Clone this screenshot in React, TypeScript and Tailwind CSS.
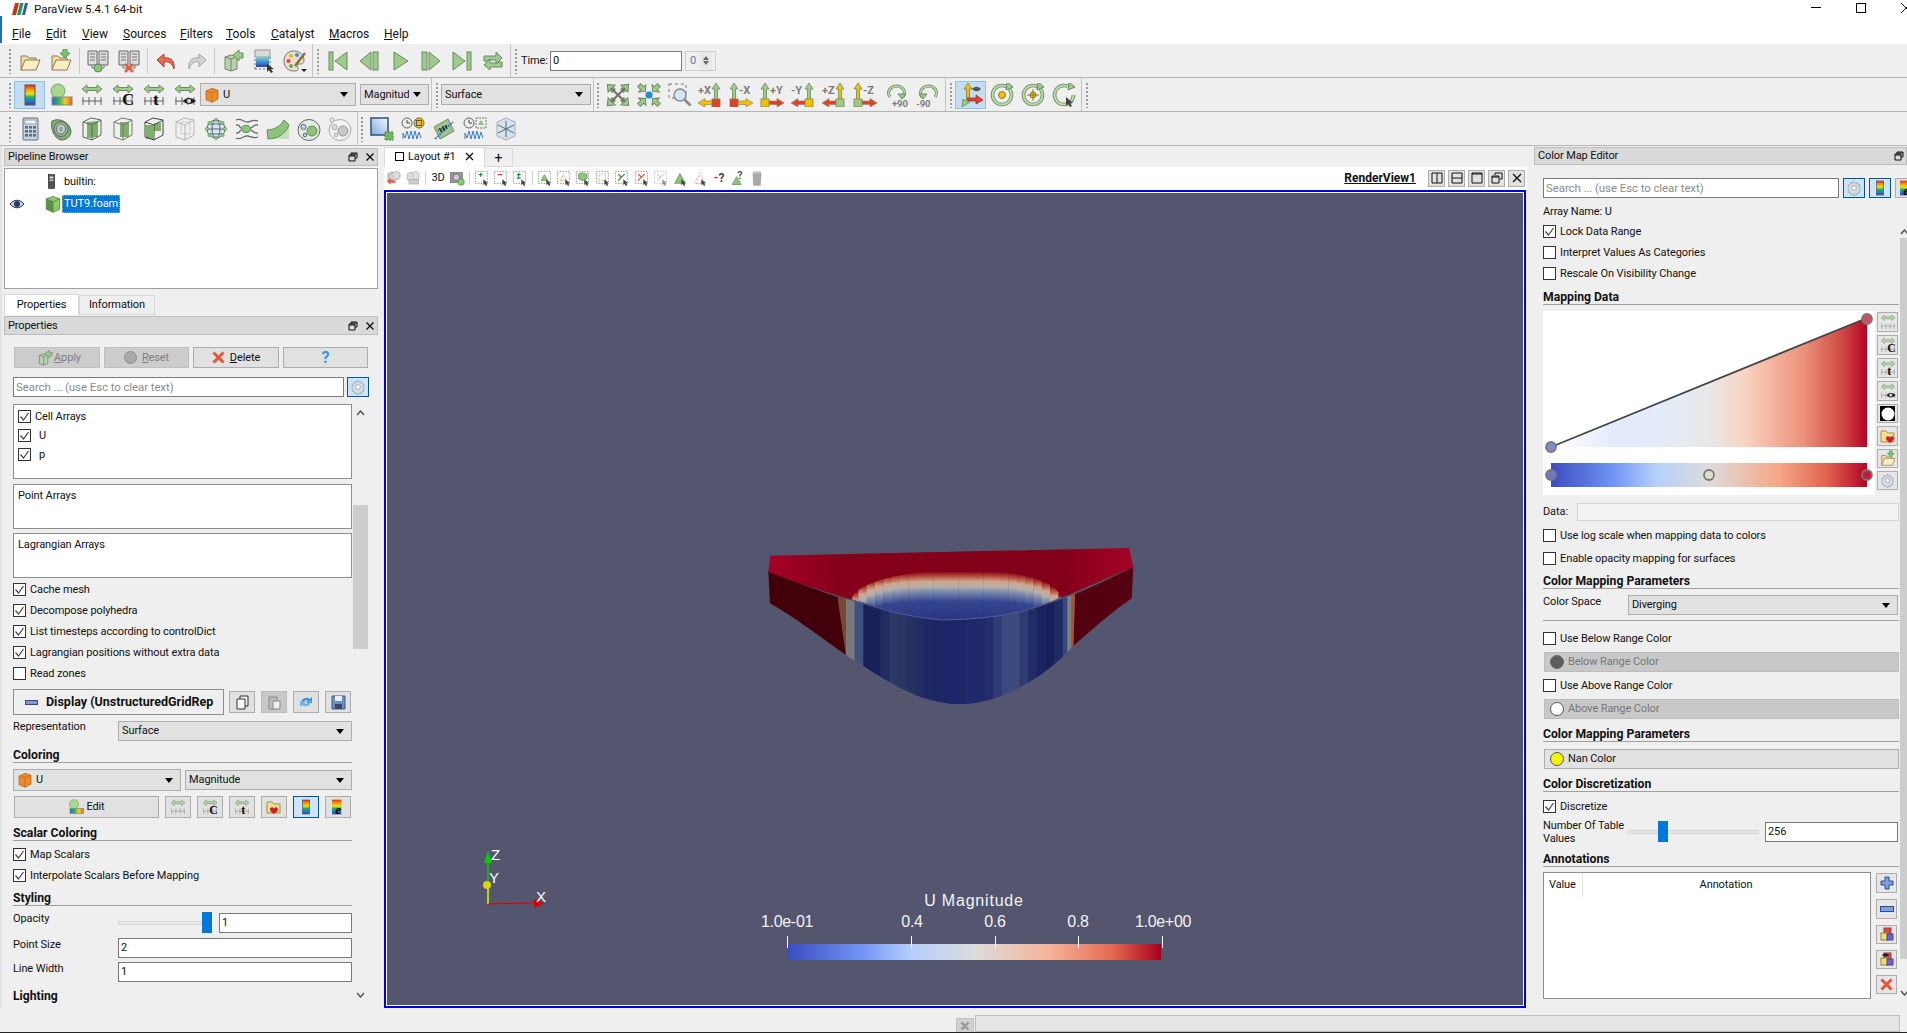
import type { ReactNode } from "react";

const FILL = "#9ccb8c";
const LINE = "#6d8a60";

const Ico = ({ children, s = 24 }: { children: ReactNode; s?: number }) => (
  <svg width={s} height={s} viewBox="0 0 24 24" className="block shrink-0">
    {children}
  </svg>
);

const FolderShape = () => (
  <>
    <path d="M3 21V7h6l2 2h7v3" fill="#f3dca0" stroke="#8a7a50" />
    <path d="M3 21l4-10h15l-4 10z" fill="#fbeec5" stroke="#8a7a50" />
  </>
);
const OpenFile = () => <Ico><FolderShape /></Ico>;
const LoadState = () => (
  <Ico>
    <FolderShape />
    <path d="M14 0h4v4h3l-5 5-5-5h3z" fill="#76c46e" stroke="#5a9a55" />
  </Ico>
);
const Servers = () => (
  <>
    <path d="M2 2h9v14H2zM13 2h9v14h-9z" fill="#dcdcdc" stroke="#666" />
    <path d="M4 5h5M4 8h5M4 11h5M15 5h5M15 8h5M15 11h5" stroke="#777" />
    <path d="M6 16v3h12v-3" fill="none" stroke="#777" />
  </>
);
const Connect = () => (
  <Ico>
    <Servers />
    <circle cx="12" cy="19" r="4" fill="#8cc47a" stroke="#5f8a55" />
  </Ico>
);
const Disconnect = () => (
  <Ico>
    <Servers />
    <path d="M8 15l8 8M16 15l-8 8" stroke="#e0604a" strokeWidth="2.6" />
  </Ico>
);
const Undo = () => (
  <Ico>
    <path d="M20 20c1-8-3-12-10-11V5L3 11l7 7v-5c5-1 8 1 10 7z" fill="#ea6a50" stroke="#a8402e" />
  </Ico>
);
const Redo = () => (
  <Ico>
    <path d="M4 20c-1-8 3-12 10-11V5l7 6-7 7v-5c-5-1-8 1-10 7z" fill="#d4d4d4" stroke="#a2a2a2" />
  </Ico>
);
const AutoApply = () => (
  <Ico>
    <path d="M4 8l6-2 6 2v12l-6 2-6-2z" fill="#b9cfae" stroke="#6d8a60" />
    <path d="M4 8l6 2 6-2M10 10v12" fill="none" stroke="#6d8a60" />
    <path d="M12 6l6-5v3h4v5h-4v3z" fill={FILL} stroke={LINE} />
  </Ico>
);
const PickColor = () => (
  <Ico>
    <rect x="3" y="1" width="15" height="7" fill="#d9d9d9" stroke="#999" />
    <rect x="4" y="8" width="13" height="10" fill="url(#blues)" />
    <path d="M3 20V8M18 8v12M3 20h15" stroke="#666" strokeDasharray="2 2" fill="none" />
    <path d="M15 15v8l2-2 2 3 2-1-2-3h3z" fill="#333" />
  </Ico>
);
const Palette = () => (
  <Ico>
    <path d="M11 2c6 0 10 4 10 9 0 4-3 4-5 4-2 0-2 2-1 4 1 2-1 3-4 3-6 0-10-4-10-10S5 2 11 2z" fill="#eadfca" stroke="#777" />
    <circle cx="8" cy="7" r="2" fill="#e6b62e" />
    <circle cx="14" cy="6" r="2" fill="#3d8fd6" />
    <circle cx="5.5" cy="12" r="2" fill="#d9483b" />
    <circle cx="8" cy="17" r="2" fill="#5fae56" />
    <path d="M12 17L22 4" stroke="#8a6d3b" strokeWidth="2.4" />
    <path d="M18 20h6l-3 3z" fill="#222" />
  </Ico>
);

const VFirst = () => (
  <Ico><rect x="3" y="3" width="4" height="18" fill={FILL} stroke={LINE} /><path d="M21 3v18L9 12z" fill={FILL} stroke={LINE} /></Ico>
);
const VPrev = () => (
  <Ico><path d="M14 3v18L3 12z" fill={FILL} stroke={LINE} /><rect x="16" y="3" width="5" height="18" fill={FILL} stroke={LINE} /></Ico>
);
const VPlay = () => (
  <Ico><path d="M6 3v18l14-9z" fill={FILL} stroke={LINE} /></Ico>
);
const VNext = () => (
  <Ico><rect x="3" y="3" width="5" height="18" fill={FILL} stroke={LINE} /><path d="M10 3v18l11-9z" fill={FILL} stroke={LINE} /></Ico>
);
const VLast = () => (
  <Ico><path d="M3 3v18l12-9z" fill={FILL} stroke={LINE} /><rect x="17" y="3" width="4" height="18" fill={FILL} stroke={LINE} /></Ico>
);
const VLoop = () => (
  <Ico>
    <path d="M3 12V7h12V3l6 6-6 6v-4H7v1z" fill={FILL} stroke={LINE} />
    <path d="M21 13v5H9v3l-6-5 6-6v4h8v-1z" fill={FILL} stroke={LINE} />
  </Ico>
);

const Rainbow = () => (
  <Ico>
    <rect x="7" y="2" width="10" height="20" fill="url(#rainbow)" stroke="#555" />
  </Ico>
);
const ColorEdit = ({ s = 24 }: { s?: number }) => (
  <Ico s={s}>
    <circle cx="9" cy="8" r="7" fill="#a8d88e" stroke="#7aa56d" />
    <rect x="3" y="14" width="20" height="8" fill="url(#rainbowH)" stroke="#888" />
  </Ico>
);
const RulerArrow = ({ pale }: { pale?: boolean }) => (
  <>
    <path d="M2 6l5-4v2.5h10V2l5 4-5 4V7.5H7V10z" fill={FILL} stroke={LINE} opacity={pale ? 0.7 : 1} />
    <path d="M2 18h20M3 14v8M9 14v8M15 14v8M21 14v8" stroke={pale ? "#999" : "#666"} fill="none" />
  </>
);
const Rescale = ({ pale }: { pale?: boolean }) => <Ico><RulerArrow pale={pale} /></Ico>;
const RescaleText = ({ t, pale }: { t: string; pale?: boolean }) => (
  <Ico>
    <RulerArrow pale={pale} />
    <text x="11" y="22" fontFamily="Liberation Serif, serif" fontWeight="bold" fontSize="17" fill="#111">{t}</text>
  </Ico>
);
const RescaleEye = ({ pale }: { pale?: boolean }) => (
  <Ico>
    <RulerArrow pale={pale} />
    <path d="M10 18c3-4 9-4 13 0-4 4-10 4-13 0z" fill="#222" />
    <circle cx="16" cy="18" r="2" fill="#ddd" />
  </Ico>
);

const Arrows4 = ({ inward }: { inward?: boolean }) => (
  <Ico>
    {[45, 135, 225, 315].map((a) => (
      <path
        key={a}
        transform={`rotate(${a} 12 12)`}
        d={inward ? "M12 7l-5-4.5h3V-2h4v4.5h3z" : "M12 -3l5 6h-3v3h-4V3H7z"}
        fill={FILL}
        stroke={LINE}
      />
    ))}
    {inward ? <circle cx="12" cy="12" r="3.6" fill="#1e8bd2" /> : <path d="M5 5l14 14M19 5L5 19" stroke="#6b7263" strokeWidth="2" />}
  </Ico>
);
const ZoomBox = () => (
  <Ico>
    <path d="M1 1h17v14H1z" fill="none" stroke="#777" strokeDasharray="3 3" />
    <circle cx="12" cy="12" r="6" fill="#cfe6f7" stroke="#888" strokeWidth="1.4" />
    <path d="M16.5 16.5l6 6" stroke="#888" strokeWidth="2.6" />
  </Ico>
);
const AxisIcon = ({ label, box, up, arm, right }: { label: string; box: string; up: string; arm: string; right?: boolean }) => {
  const bx = right ? 2 : 15;
  return (
    <svg width={27} height={24} viewBox="0 0 27 24" className="block shrink-0">
      <path transform={`translate(${bx} 0)`} d="M4 0l4 6H5.5v11h-3V6H0z" fill={up} stroke="#6d8a60" strokeWidth=".8" />
      {right ? (
        <path d="M10 18h8v-2.5l7 4.5-7 4v-2.500h-8z" fill={arm} stroke="#886" strokeWidth=".7" />
      ) : (
        <path d="M16 18H8v-2.500L1 20l7 4v-2.500h8z" fill={arm} stroke="#886" strokeWidth=".7" />
      )}
      <rect x={bx} y="16" width="8" height="8" fill={box} stroke="#887a50" strokeWidth=".8" />
      <text x={right ? 11 : 1} y="11" fontFamily="Roboto, sans-serif" fontWeight="bold" fontSize="11" fill="#7d7d7d">{label}</text>
    </svg>
  );
};
const Ring = ({ children, open }: { children?: ReactNode; open?: boolean }) => (
  <Ico>
    <circle cx="12" cy="12" r="9.500" fill="none" stroke={LINE} strokeWidth="3.600" strokeDasharray={open ? "48 12" : undefined} />
    <circle cx="12" cy="12" r="9.500" fill="none" stroke="#b7dca9" strokeWidth="2" strokeDasharray={open ? "48 12" : undefined} />
    <path d="M17 -1l6 5-7 3z" fill={FILL} stroke={LINE} />
    {children}
  </Ico>
);
const Rot = ({ label, flip }: { label: string; flip?: boolean }) => (
  <Ico>
    <g transform={flip ? "translate(24 0) scale(-1 1)" : undefined}>
      <path d="M16 14a8 7 0 1 0-13 0" transform="translate(2 0)" fill="none" stroke={LINE} strokeWidth="3" />
      <path d="M16 14a8 7 0 1 0-13 0" transform="translate(2 0)" fill="none" stroke="#b7dca9" strokeWidth="1.500" />
      <path d="M13 11h8l-4 5z" fill={FILL} stroke={LINE} />
    </g>
    <text x={flip ? 0 : 7} y="23.500" fontFamily="Roboto, sans-serif" fontWeight="bold" fontSize="9.500" fill="#7d7d7d">{label}</text>
  </Ico>
);
const OrientAxes = () => (
  <Ico>
    <path d="M9 0l4 6h-2.500v10h-3V6H5z" fill="#f6c000" stroke="#8a7a30" strokeWidth=".8" />
    <path d="M8 15h9v-3l7 5-7 4v-3H9z" fill="#e2402e" stroke="#933" strokeWidth=".8" />
    <path d="M8 15v4h3l-8 5 1-8 2 2 2-3z" fill={FILL} stroke={LINE} strokeWidth=".8" />
    <path d="M13 6c3-3 6-3 9 0-3 3-6 3-9 0z" fill="#555" />
  </Ico>
);

const Calc = () => (
  <Ico>
    <rect x="5" y="1" width="15" height="22" rx="1" fill="#c9d4dc" stroke="#5e7080" />
    <rect x="7" y="3" width="11" height="4" fill="#f1f4f6" stroke="#7a8a98" strokeWidth=".7" />
    {[9, 13, 17].map((y) => [7, 11, 15].map((x) => <rect key={`${x}-${y}`} x={x} y={y} width="3" height="2.600" fill="#5e7080" />))}
  </Ico>
);
const Contour = () => (
  <Ico>
    <path d="M3 4c8-4 18 2 19 10 0 6-5 9-10 9C6 22 1 12 3 4z" fill="#7fae6b" stroke="#55704b" />
    <ellipse cx="12" cy="12" rx="7" ry="7.500" fill="#9fb1a3" stroke="#4f6f64" />
    <ellipse cx="12" cy="12" rx="4.500" ry="5" fill="#c5cdc9" stroke="#5d7a70" />
    <ellipse cx="12" cy="12" rx="2" ry="2.500" fill="#8fa199" />
  </Ico>
);
const Cube = ({ stroke = "#555", children }: { stroke?: string; children?: ReactNode }) => (
  <Ico>
    {children}
    <path d="M3 5l8-4 10 2v15l-9 5-9-3z" fill="none" stroke={stroke} />
    <path d="M3 5l9 3 9-5M12 8v15" fill="none" stroke={stroke} />
  </Ico>
);
const Glyph = () => (
  <Ico>
    <circle cx="12" cy="12" r="9" fill="#d6e4ee" stroke="#567" />
    <ellipse cx="12" cy="12" rx="4" ry="9" fill="none" stroke="#567" />
    <path d="M3 12h18M5 7h14M5 17h14" stroke="#567" fill="none" />
    {[[12, 3], [12, 21], [3, 12], [21, 12], [5.500, 6], [18.500, 6], [5.500, 18], [18.500, 18]].map(([x, y]) => (
      <circle key={`${x}-${y}`} cx={x} cy={y} r="1.800" fill="#8cc47a" stroke="#5f8a55" strokeWidth=".5" />
    ))}
  </Ico>
);
const Stream = () => (
  <Ico>
    <path d="M1 3c5-3 8 3 12 2s6-3 10-1M1 21c5 3 8-3 12-2s6 3 10 1M1 8c4-1 3 2 5 3M23 8c-4-1-5 2-7 3M1 16c4 1 3-2 5-3M23 16c-4 1-5-2-7-3" fill="none" stroke="#666" strokeWidth="1.300" />
    <ellipse cx="11" cy="12" rx="4.500" ry="3.500" fill="#8cc47a" stroke="#5f8a55" />
  </Ico>
);
const Warp = () => (
  <Ico>
    <path d="M1 13C8 13 15 9 18 3l5 4v15H1z" fill="#c5dfba" />
    <path d="M1 13C8 13 15 9 18 3l5 5C20 16 12 22 2 22z" fill="#8cc47a" stroke="#6d8a60" />
  </Ico>
);
const Group = ({ pale }: { pale?: boolean }) => (
  <Ico>
    <ellipse cx="12" cy="13" rx="11" ry="10.500" fill={pale ? "#f2f2f2" : "#e4ebe2"} stroke={pale ? "#aaa" : "#666"} />
    <circle cx="15" cy="14" r="5" fill={pale ? "#c6c6c6" : "#8cc47a"} stroke={pale ? "#999" : "#5f8a55"} />
    <circle cx="6.500" cy="10" r="2.600" fill={pale ? "#ddd" : "#c6d3e0"} stroke={pale ? "#aaa" : "#567"} />
    <circle cx="8" cy="18" r="1.800" fill={pale ? "#ddd" : "#c6d3e0"} stroke={pale ? "#aaa" : "#567"} />
    {pale && <circle cx="4" cy="3" r="2" fill="#eee" stroke="#aaa" />}
  </Ico>
);
const NewBox = () => (
  <Ico>
    <rect x="1" y="1" width="17" height="17" fill="url(#blueSq)" stroke="#3a5a7a" strokeWidth="1.600" />
    <rect x="15" y="15" width="8" height="8" fill="#72b85e" stroke="#4f8a42" strokeDasharray="2 1" />
  </Ico>
);
const Wave = () => (
  <path d="M2 22V16l2 5 2-7 2 8 2-8 2 8 2-8 2 8 2-7 2 6" fill="none" stroke="#3a7fc4" strokeWidth="1" />
);
const PlotOver = () => (
  <Ico>
    <circle cx="6" cy="6" r="5" fill="#eee" stroke="#666" />
    <path d="M6 3v3h3" fill="none" stroke="#444" />
    <circle cx="18" cy="6" r="5" fill="#f6c000" stroke="#666" />
    <rect x="15.500" y="3.500" width="5" height="5" fill="none" stroke="#555" />
    <Wave />
  </Ico>
);
const PlotTime = () => (
  <Ico>
    <path d="M2 10L16 2l6 12-14 8z" fill="#9fc48f" stroke="#6d8a60" />
    <path d="M3 22L21 5" stroke="#2f74c0" strokeWidth="1.800" strokeDasharray="2 1" />
    <path d="M6 14l2-3 1 4 2-6 1 5 2-6 1 4" fill="none" stroke="#234" />
  </Ico>
);
const PlotSel = () => (
  <Ico>
    <circle cx="6" cy="6" r="5" fill="#eee" stroke="#666" />
    <path d="M6 3v3h3" fill="none" stroke="#444" />
    <rect x="13" y="1" width="10" height="10" fill="none" stroke="#777" strokeDasharray="2 1" />
    <path d="M18 3l3 5h-6z" fill="#8cc47a" />
    <Wave />
  </Ico>
);
const CubeAxes = () => (
  <Ico>
    <path d="M3 5l9-4 9 4v14l-9 4-9-4z" fill="#d5e1ec" stroke="#9eb0c0" />
    <path d="M12 4v16M4 16l16-8M4 8l16 8" stroke="#5a6b78" />
  </Ico>
);

const Dotted = ({ children, s = 16 }: { children?: ReactNode; s?: number }) => (
  <Ico s={s}>
    <path d="M2 2h18v18H2z" fill="none" stroke="#555" strokeDasharray="2 2" />
    {children}
    <path d="M14 14v9l2-2 2 3 2-1-2-3h3z" fill="#444" />
  </Ico>
);
const Pointer = () => <path d="M14 14v9l2-2 2 3 2-1-2-3h3z" fill="#444" />;

const ViewIcons = {
  swap: (
    <Ico s={16}><path d="M3 6l6-3 7 3v8l-7 3-6-3z" fill="#ccc" stroke="#888" /><path d="M10 4l7-2 4 3v7l-6 3" fill="#ddd" stroke="#999" /><path d="M15 20c-1-4-4-6-8-5v-3l-6 5 6 5v-3c3 0 6 0 8 1z" fill="#e0604a" /></Ico>
  ),
  swapGray: (
    <Ico s={16}><path d="M3 6l6-3 7 3v8l-7 3-6-3z" fill="#ddd" stroke="#aaa" /><path d="M10 4l7-2 4 3v7l-6 3z" fill="#e3e3e3" stroke="#aaa" /><rect x="6" y="14" width="14" height="7" fill="#ccc" stroke="#aaa" /></Ico>
  ),
  cam: (
    <Ico s={16}><rect x="2" y="4" width="18" height="15" fill="#999" stroke="#666" /><circle cx="11" cy="11" r="5" fill="#ccc" stroke="#555" /><circle cx="18" cy="18" r="5" fill="#8cc47a" stroke="#5f8a55" /></Ico>
  ),
};

const Tb = ({ children, sel }: { children?: ReactNode; sel?: boolean }) => (
  <div className={`w-[31px] h-[28px] flex items-center justify-center shrink-0 border ${sel ? "bg-[#c4ddf2] border-[#8cc2ee]" : "border-transparent"}`}>
    {children}
  </div>
);
const Sep = ({ w = 6 }: { w?: number }) => (
  <div className="flex justify-center shrink-0 h-[26px]" style={{ width: w }}>
    <div className="w-px h-full bg-[#cdcdcd]" />
  </div>
);
const EndCap = ({ w = 9 }: { w?: number }) => (
  <div className="flex h-full shrink-0 items-center">
    <div className="w-px h-full bg-[#c4c4c4] ml-[2px]" />
    <div className="flex justify-center" style={{ width: w }}>
      <div className="w-[2px] h-[26px] bg-[radial-gradient(circle,#9a9a9a_35%,transparent_40%)] bg-[length:2px_4px]" />
    </div>
  </div>
);
const TbRow = ({ children }: { children: ReactNode }) => (
  <div className="h-[34px] flex items-center border-b border-[#b4b4b4] pl-[6px] overflow-hidden">
    <div className="w-[8px] flex justify-center shrink-0">
      <div className="w-[2px] h-[26px] bg-[radial-gradient(circle,#9a9a9a_35%,transparent_40%)] bg-[length:2px_4px]" />
    </div>
    {children}
  </div>
);
const Combo = ({ children, className = "" }: { children: ReactNode; className?: string }) => (
  <div className={`flex items-center justify-between bg-[#e1e1e1] border border-[#adadad] pl-[3px] pr-[7px] shrink-0 overflow-hidden ${className}`}>
    <div className="flex items-center gap-[3px] overflow-hidden whitespace-nowrap">{children}</div>
    <div className="w-0 h-0 border-x-[4.500px] border-x-transparent border-t-[5px] border-t-black shrink-0 ml-[2px]" />
  </div>
);
const OrangeCube = ({ s = 16 }: { s?: number }) => (
  <Ico s={s}>
    <path d="M12 2l9 3v13l-9 5-9-4V6z" fill="#ef8a2a" stroke="#a55c12" />
    <path d="M3 6l9 3 9-4M12 9v14" fill="none" stroke="#b96a1a" />
  </Ico>
);

const Box = ({ checked = true }: { checked?: boolean }) => (
  <div className="w-[13px] h-[13px] border border-[#333] bg-white shrink-0 flex items-center justify-center">
    {checked && (
      <svg width={11} height={11} viewBox="0 0 11 11"><path d="M1.500 5.500L4.500 9l5-7" fill="none" stroke="#444" strokeWidth="1.200" /></svg>
    )}
  </div>
);
const Check = ({ label, checked = true }: { label: string; checked?: boolean }) => (
  <div className="h-[21px] flex items-center gap-[4px] whitespace-nowrap">
    <Box checked={checked} />
    <span>{label}</span>
  </div>
);
const Section = ({ title, className = "" }: { title: string; className?: string }) => (
  <div className={`h-[15px] font-bold text-[12.200px] tracking-normal leading-[14px] border-b border-[#a0a0a0] whitespace-nowrap ${className}`}>{title}</div>
);
const Field = ({ value, className = "" }: { value: string; className?: string }) => (
  <div className={`bg-white border border-[#7a7a7a] h-[20px] flex items-center pl-[2px] ${className}`}>{value}</div>
);
const SmBtn = ({ children, sel }: { children?: ReactNode; sel?: boolean }) => (
  <div className={`w-[26px] h-[22px] flex items-center justify-center shrink-0 border ${sel ? "bg-[#cce4f7] border-[#005499]" : "bg-[#e1e1e1] border-[#adadad]"}`}>
    {children}
  </div>
);
const PanelHead = ({ title, close, tall }: { title: string; close?: boolean; tall?: boolean }) => (
  <div className={`${tall ? "h-[19px]" : "h-[18px]"} flex items-center justify-between bg-[#d9d9d9] border border-[#bdbdbd] pl-[3px] pr-[2px]`}>
    <span>{title}</span>
    <div className="flex items-center gap-[7px]">
      <DockIcon />
      {close && <CloseX />}
    </div>
  </div>
);
const DockIcon = () => (
  <svg width={10} height={10} viewBox="0 0 10 10" className="block">
    <path d="M3 3V1h6v5H7M1 3h6v6H1zM1 4h6M3 2h6" fill="none" stroke="#111" />
  </svg>
);
const CloseX = () => (
  <svg width={10} height={10} viewBox="0 0 10 10" className="block">
    <path d="M1.500 1.500l7 7M8.500 1.500l-7 7" stroke="#111" strokeWidth="1.400" />
  </svg>
);
const Gear = ({ s = 16 }: { s?: number }) => (
  <Ico s={s}>
    <path d="M12 2l2 3 3-1 1 3 3 1-1 3 2 2-2 2 1 3-3 1-1 3-3-1-2 3-2-3-3 1-1-3-3-1 1-3-2-2 2-2-1-3 3-1 1-3 3 1z" fill="#d5dbe0" stroke="#8a97a3" />
    <circle cx="12" cy="12" r="3.500" fill="#f4f6f8" stroke="#8a97a3" />
  </Ico>
);
const GearBtn = ({ children }: { children: ReactNode }) => (
  <div className="w-[22px] h-[20px] bg-[#cce4f7] border border-[#005499] flex items-center justify-center shrink-0">{children}</div>
);
const Search = ({ className = "" }: { className?: string }) => (
  <div className={`h-[20px] bg-white border border-[#7a7a7a] flex items-center pl-[2px] text-[11.500px] text-[#8b8b8b] whitespace-nowrap shrink-0 ${className}`}>
    Search ... (use Esc to clear text)
  </div>
);
const Disabled = ({ children, className = "" }: { children: ReactNode; className?: string }) => (
  <div className={`h-[20px] bg-[#c8c8c8] border border-[#bdbdbd] flex items-center pl-[5px] gap-[4px] text-[#777] ${className}`}>{children}</div>
);
const Swatch = ({ className }: { className: string }) => <div className={`w-[14px] h-[14px] rounded-full border border-[#555] ${className}`} />;
const Slider = ({ w, at }: { w: number; at: number }) => (
  <div className="relative h-[21px] flex items-center" style={{ width: w }}>
    <div className="w-full h-[4px] bg-[#e6e6e6] border border-[#d6d6d6]" />
    <div className="absolute top-0 w-[10px] h-[21px] bg-[#0078d7]" style={{ left: at }} />
  </div>
);
const SideBtn = ({ children, h = 20 }: { children?: ReactNode; h?: number }) => (
  <div className="w-[21px] bg-[#e6e6e6] border border-[#adadad] flex items-center justify-center shrink-0" style={{ height: h }}>
    {children}
  </div>
);
const Sm = ({ children }: { children: ReactNode }) => <div className="scale-[0.7] shrink-0">{children}</div>;

function TopToolbars() {
  return (
    <div>
      <TbRow>
        <Tb><OpenFile /></Tb><Tb><LoadState /></Tb>
        <Sep />
        <Tb><Connect /></Tb><Tb><Disconnect /></Tb>
        <Sep />
        <Tb><Undo /></Tb><Tb><Redo /></Tb>
        <Sep w={5} />
        <Tb><AutoApply /></Tb><Tb><PickColor /></Tb><Tb><Palette /></Tb>
        <EndCap w={9} />
        <Tb><VFirst /></Tb><Tb><VPrev /></Tb><Tb><VPlay /></Tb><Tb><VNext /></Tb><Tb><VLast /></Tb><Tb><VLoop /></Tb>
        <EndCap w={9} />
        <span className="ml-[1px] w-[29px] shrink-0">Time:</span>
        <div className="w-[132px] h-[20px] bg-white border border-[#7a7a7a] flex items-center pl-[2px] shrink-0">0</div>
        <div className="ml-[3px] w-[31px] h-[20px] border border-[#cfcfcf] flex items-center justify-between pl-[4px] pr-[3px] text-[#5f7fa8] shrink-0">
          <span>0</span>
          <div className="w-[12px] h-[18px] flex flex-col gap-[1px] justify-center items-center bg-[#e8e8e8]">
            <div className="w-0 h-0 border-x-[3px] border-x-transparent border-b-[4px] border-b-[#666]" />
            <div className="w-0 h-0 border-x-[3px] border-x-transparent border-t-[4px] border-t-[#666]" />
          </div>
        </div>
      </TbRow>
      <TbRow>
        <Tb sel><Rainbow /></Tb><Tb><ColorEdit /></Tb><Tb><Rescale /></Tb><Tb><RescaleText t="C" /></Tb><Tb><RescaleText t="t" /></Tb><Tb><RescaleEye /></Tb>
        <Combo className="w-[156px] h-[23px]"><OrangeCube /><span>U</span></Combo>
        <Combo className="ml-[4px] w-[69px] h-[21px]"><span className="w-[45px] overflow-hidden">Magnitude</span></Combo>
        <EndCap w={9} />
        <Combo className="w-[150px] h-[21px]"><span>Surface</span></Combo>
        <EndCap w={8} />
        <Tb><Arrows4 /></Tb><Tb><Arrows4 inward /></Tb><Tb><ZoomBox /></Tb>
        <Tb><AxisIcon label="+X" box="#e2402e" up={FILL} arm="#f6c000" /></Tb>
        <Tb><AxisIcon label="-X" box="#e2402e" up={FILL} arm="#f6c000" right /></Tb>
        <Tb><AxisIcon label="+Y" box="#f6c000" up={FILL} arm="#e2402e" right /></Tb>
        <Tb><AxisIcon label="-Y" box="#f6c000" up={FILL} arm="#e2402e" /></Tb>
        <Tb><AxisIcon label="+Z" box={FILL} up="#f6c000" arm="#e2402e" /></Tb>
        <Tb><AxisIcon label="-Z" box={FILL} up="#f6c000" arm="#e2402e" right /></Tb>
        <Tb><Rot label="+90" /></Tb><Tb><Rot label="-90" flip /></Tb>
        <EndCap w={9} />
        <Tb sel><OrientAxes /></Tb>
        <Tb><Ring><circle cx="12" cy="12" r="3.500" fill="#f6c000" stroke="#8a7a30" /></Ring></Tb>
        <Tb><Ring><circle cx="12" cy="12" r="3" fill="#f6c000" stroke="#8a7a30" /><path d="M12 6v12M6 12h12" stroke="#8a7a30" /></Ring></Tb>
        <Tb><Ring open><Pointer /></Ring></Tb>
        <EndCap w={9} />
      </TbRow>
      <TbRow>
        <Tb><Calc /></Tb><Tb><Contour /></Tb>
        <Tb><Cube stroke="#5a6a55"><path d="M7 5l11-1v16l-11 1z" fill="#7fae6b" /></Cube></Tb>
        <Tb><Cube stroke="#777"><path d="M9 5h9v15H9z" fill="#7fae6b" /></Cube></Tb>
        <Tb><Cube stroke="#444"><path d="M4 8h7v14H4zM12 6h7v8h-7z" fill="#7fae6b" /></Cube></Tb>
        <Tb><Cube stroke="#b5b5b5"><path d="M8 5h9v12H8z" fill="#eeeeee" stroke="#ccc" /></Cube></Tb>
        <Tb><Glyph /></Tb><Tb><Stream /></Tb><Tb><Warp /></Tb><Tb><Group /></Tb><Tb><Group pale /></Tb>
        <EndCap w={8} />
        <Tb><NewBox /></Tb><Tb><PlotOver /></Tb><Tb><PlotTime /></Tb><Tb><PlotSel /></Tb><Tb><CubeAxes /></Tb>
      </TbRow>
    </div>
  );
}

function LeftPanel() {
  return (
    <div className="w-[384px] shrink-0 pl-[2px] h-full border-l-[2px] border-[#e2e2e2]">
      <div className="w-[374px] mt-[2px]">
        <PanelHead title="Pipeline Browser" close />
        <div className="mt-[2px] h-[121px] bg-white border border-[#a0a0a0] pt-[2px]">
          <div className="h-[21px] flex items-center pl-[39px] gap-[5px]">
            <Ico s={15}>
              <rect x="7" y="1" width="10" height="22" fill="#555" stroke="#222" />
              <rect x="9" y="4" width="6" height="3" fill="#ddd" />
              <rect x="9" y="9" width="6" height="2" fill="#ddd" />
            </Ico>
            <span>builtin:</span>
          </div>
          <div className="mt-[1px] h-[21px] flex items-center pl-[4px]">
            <svg width={16} height={10} viewBox="0 0 16 10" className="block shrink-0">
              <path d="M1 5c4-5 10-5 14 0-4 5-10 5-14 0z" fill="#c5d2e4" stroke="#234" />
              <circle cx="8" cy="5" r="3" fill="#223b66" />
            </svg>
            <div className="ml-[19px] shrink-0">
              <Ico s={18}>
                <path d="M3 5l9-3 9 3v14l-9 4-9-4z" fill="#8ccb6a" stroke="#4d7a3a" />
                <path d="M3 5l9 4 9-4M12 9v14" fill="none" stroke="#4d7a3a" />
                <path d="M3 5l9 4v14l-9-4z" fill="#5f8e4a" />
              </Ico>
            </div>
            <div className="h-[18px] px-[1px] flex items-center bg-[#0078d7] text-white border border-dotted border-[#f2a33a] whitespace-nowrap">TUT9.foam</div>
          </div>
        </div>
        <div className="mt-[5px] flex h-[21px]">
          <div className="w-[75px] bg-white border border-b-0 border-[#d9d9d9] flex items-center justify-center">Properties</div>
          <div className="w-[76px] mt-[1px] border border-[#d9d9d9] flex items-center justify-center">Information</div>
        </div>
        <div className="mt-[1px]"><PanelHead title="Properties" close tall /></div>
      </div>
      <div className="w-[355px] ml-[9px]">
        <div className="mt-[12px] flex gap-[4px] pl-[1px]">
          <div className="w-[86px] h-[21px] bg-[#cccccc] border border-[#bfbfbf] flex items-center justify-center gap-[5px] text-[#808080]">
            <Sm><AutoApply /></Sm><span className="-ml-[8px]"><u>A</u>pply</span>
          </div>
          <div className="w-[85px] h-[21px] bg-[#cccccc] border border-[#bfbfbf] flex items-center justify-center gap-[5px] text-[#808080]">
            <span className="w-[13px] h-[13px] rounded-full bg-[#a8a8a8] border border-[#8f8f8f]" /><span><u>R</u>eset</span>
          </div>
          <div className="w-[86px] h-[21px] bg-[#e1e1e1] border border-[#adadad] flex items-center justify-center gap-[5px]">
            <svg width={13} height={13} viewBox="0 0 13 13"><path d="M1.500 1.500l10 10M11.500 1.500l-10 10" stroke="#e8553c" strokeWidth="3" /></svg>
            <span><u>D</u>elete</span>
          </div>
          <div className="w-[85px] h-[21px] bg-[#e1e1e1] border border-[#adadad] flex items-center justify-center font-bold text-[16px] text-[#2f9be0]">?</div>
        </div>
        <div className="mt-[9px] flex gap-[3px]">
          <Search className="w-[331px]" />
          <GearBtn><Gear /></GearBtn>
        </div>
        <div className="flex">
          <div className="w-[339px] h-[599px] mt-[7px] overflow-hidden shrink-0">
            <div className="h-[75px] bg-white border border-[#8f8f8f] pl-[4px] pt-[2px]">
              <div className="h-[19px] flex items-center gap-[4px]"><Box /><span>Cell Arrays</span></div>
              <div className="h-[19px] flex items-center gap-[8px]"><Box /><span>U</span></div>
              <div className="h-[19px] flex items-center gap-[8px]"><Box /><span>p</span></div>
            </div>
            <div className="mt-[5px] h-[45px] bg-white border border-[#8f8f8f] pl-[4px] pt-[4px]">Point Arrays</div>
            <div className="mt-[4px] h-[45px] bg-white border border-[#8f8f8f] pl-[4px] pt-[4px]">Lagrangian Arrays</div>
            <div className="mt-[1px]">
              <Check label="Cache mesh" />
              <Check label="Decompose polyhedra" />
              <Check label="List timesteps according to controlDict" />
              <Check label="Lagrangian positions without extra data" />
              <Check label="Read zones" checked={false} />
            </div>
            <div className="mt-[5px] flex items-center">
              <div className="w-[211px] h-[26px] bg-[#efefef] border border-[#8f8f8f] flex items-center pl-[11px] gap-[8px] font-bold text-[12.500px] tracking-normal whitespace-nowrap overflow-hidden shrink-0">
                <div className="w-[13px] h-[5px] bg-[#7f97d8] border border-[#3a4a80] shrink-0" />
                <span>Display (UnstructuredGridRep</span>
              </div>
              <div className="ml-[5px] flex gap-[6px]">
                <SmBtn><svg width={15} height={15} viewBox="0 0 15 15"><path d="M5 1h8v10H5z" fill="#eee" stroke="#333" /><path d="M2 4h8v10H2z" fill="#fafafa" stroke="#333" /></svg></SmBtn>
                <div className="w-[26px] h-[22px] bg-[#c8c8c8] border border-[#bdbdbd] flex items-center justify-center"><svg width={15} height={15} viewBox="0 0 15 15"><path d="M2 2h8v12H2z" fill="#bbb" stroke="#888" /><path d="M6 6h7v8H6z" fill="#eee" stroke="#888" /></svg></div>
                <SmBtn><svg width={16} height={16} viewBox="0 0 16 16"><path d="M3 9a5.500 5.500 0 0 1 9-4l2-2v6H8l2-2a3 3 0 0 0-5 2z" fill="#3d8fd6" /><path d="M13 7a5.500 5.500 0 0 1-9 4l-2 2V7h6L6 9a3 3 0 0 0 5-2z" fill="#6fb3e8" /></svg></SmBtn>
                <SmBtn><svg width={15} height={15} viewBox="0 0 15 15"><path d="M1 1h13v13H1z" fill="#6c8ec4" stroke="#3a5a8a" /><rect x="4" y="1" width="7" height="5" fill="#eef2f8" /><rect x="4" y="9" width="7" height="5" fill="#3a4a60" /></svg></SmBtn>
              </div>
            </div>
            <div className="mt-[6px] flex items-start h-[20px]">
              <span className="w-[105px] -mt-[1px] shrink-0">Representation</span>
              <Combo className="w-[234px] h-[20px]"><span>Surface</span></Combo>
            </div>
            <Section title="Coloring" className="mt-[7px]" />
            <div className="mt-[6px] flex items-center gap-[4px]">
              <Combo className="w-[168px] h-[22px]"><OrangeCube /><span>U</span></Combo>
              <Combo className="w-[167px] h-[20px]"><span>Magnitude</span></Combo>
            </div>
            <div className="mt-[5px] flex items-center pl-[1px]">
              <div className="w-[145px] h-[22px] bg-[#e1e1e1] border border-[#adadad] flex items-center justify-center gap-[2px] shrink-0">
                <ColorEdit s={16} /><span>Edit</span>
              </div>
              <div className="ml-[6px] flex gap-[6px]">
                <SmBtn><Sm><Rescale pale /></Sm></SmBtn>
                <SmBtn><Sm><RescaleText t="C" pale /></Sm></SmBtn>
                <SmBtn><Sm><RescaleText t="t" pale /></Sm></SmBtn>
                <SmBtn><svg width={16} height={15} viewBox="0 0 16 15"><path d="M1 13V2h5l2 2h6v9z" fill="#f4e08c" stroke="#a89040" /><path d="M8 14c-3-2-5-4-3.500-6 1-1 2.500-.8 3.500 .5 1-1.300 2.500-1.500 3.500-.5 1.500 2-.5 4-3.500 6z" fill="#cf1f2f" /></svg></SmBtn>
                <SmBtn sel><Sm><Rainbow /></Sm></SmBtn>
                <SmBtn><svg width={16} height={16} viewBox="0 0 24 24"><rect x="3" y="1" width="14" height="22" fill="url(#rainbow)" /><text x="8" y="22" fontFamily="Liberation Serif, serif" fontStyle="italic" fontWeight="bold" fontSize="20" fill="#000">e</text></svg></SmBtn>
              </div>
            </div>
            <Section title="Scalar Coloring" className="mt-[8px]" />
            <div className="mt-[3px]">
              <Check label="Map Scalars" />
              <Check label="Interpolate Scalars Before Mapping" />
            </div>
            <Section title="Styling" className="mt-[5px]" />
            <div className="mt-[6px] flex items-start">
              <span className="w-[105px] shrink-0">Opacity</span>
              <Slider w={94} at={84} />
              <Field value="1" className="ml-[7px] w-[133px] mt-[1px]" />
            </div>
            <div className="mt-[5px] flex items-start">
              <span className="w-[105px] shrink-0">Point Size</span>
              <Field value="2" className="w-[234px]" />
            </div>
            <div className="mt-[4px] flex items-start">
              <span className="w-[105px] shrink-0">Line Width</span>
              <Field value="1" className="w-[234px]" />
            </div>
            <Section title="Lighting" className="mt-[7px] border-b-0" />
          </div>
          <div className="w-[16px] ml-[1px] h-[599px] mt-[7px] flex flex-col items-center">
            <svg width={9} height={6} viewBox="0 0 9 6" className="mt-[6px] shrink-0"><path d="M1 5l3.500-4L8 5" fill="none" stroke="#555" strokeWidth="1.500" /></svg>
            <div className="w-full h-[144px] mt-[89px] bg-[#cdcdcd] shrink-0" />
            <svg width={9} height={6} viewBox="0 0 9 6" className="mt-[343px] shrink-0"><path d="M1 1l3.500 4L8 1" fill="none" stroke="#555" strokeWidth="1.500" /></svg>
          </div>
        </div>
      </div>
    </div>
  );
}

function CenterPanel() {
  const dot = (kids: ReactNode, k: number) => (
    <div key={k} className="w-[19px] flex justify-center shrink-0"><Dotted>{kids}</Dotted></div>
  );
  return (
    <div className="w-[1143px] shrink-0 h-full flex flex-col">
      <div className="mt-[1px] h-[20px] flex shrink-0">
        <div className="w-[101px] bg-white border border-b-0 border-[#d9d9d9] flex items-center pl-[10px] pb-[2px] gap-[4px]">
          <div className="w-[9px] h-[9px] border border-black" />
          <span>Layout #1</span>
          <svg width={9} height={9} viewBox="0 0 9 9" className="ml-[5px]"><path d="M1 1l7 7M8 1L1 8" stroke="#111" strokeWidth="1.300" /></svg>
        </div>
        <div className="w-[28px] mt-[1px] border border-[#d9d9d9] border-l-0 flex items-center justify-center text-[14px]">+</div>
      </div>
      <div className="h-[23px] bg-white flex items-center shrink-0 text-[11px] pb-[1px]">
        <div className="w-[19px] flex justify-center">{ViewIcons.swap}</div>
        <div className="w-[19px] flex justify-center">{ViewIcons.swapGray}</div>
        <div className="w-[7px] flex justify-center"><div className="w-px h-[14px] bg-[#d0d0d0]" /></div>
        <span className="w-[18px] text-center">3D</span>
        <div className="w-[19px] flex justify-center">{ViewIcons.cam}</div>
        <div className="w-[6px] flex justify-center"><div className="w-px h-[14px] bg-[#d0d0d0]" /></div>
        {[
          <path key="a" d="M7 7h6M10 4v6" stroke="#1f9a3a" strokeWidth="2" />,
          <path key="b" d="M7 7h7" stroke="#d33" strokeWidth="2" />,
          <path key="c" d="M7 7h6M10 4v6M7 12h6" stroke="#1f9a3a" strokeWidth="2" />,
        ].map(dot)}
        <div className="w-[6px] flex justify-center"><div className="w-px h-[14px] bg-[#d0d0d0]" /></div>
        {[
          <path key="a" d="M6 16l5-9 5 9z" fill="#8cc47a" stroke="#5f8a55" />,
          <path key="b" d="M6 16l5-9 5 9z" fill="none" stroke="#d8674f" strokeDasharray="2 1" />,
          <path key="c" d="M5 6l6-2 7 2v7l-7 3-6-3z" fill="#8cc47a" stroke="#5f8a55" />,
          <path key="d" d="M6 6h10v10H6z" fill="none" stroke="#d8674f" strokeDasharray="2 2" />,
          <path key="e" d="M6 6l5 5 5-5M6 16l5-5" fill="none" stroke="#5f8a55" strokeWidth="2" />,
          <path key="f" d="M6 6l5 5 5-5M6 16l5-5" fill="none" stroke="#d8674f" strokeWidth="2" />,
          <path key="g" d="M6 6l5 5 5-5M6 16l5-5" fill="none" stroke="#bbb" strokeWidth="2" />,
        ].map((k, i) => (
          <div key={i} className={`w-[19.400px] flex justify-center shrink-0 ${i === 6 ? "opacity-60" : ""}`}><Dotted>{k}</Dotted></div>
        ))}
        <div className="w-[19.400px] flex justify-center"><Ico s={16}><path d="M4 20L12 5l8 15z" fill="#8cc47a" stroke="#5f8a55" /><Pointer /></Ico></div>
        <div className="w-[19.400px] flex justify-center"><Ico s={16}><path d="M4 20L12 5l8 15z" fill="none" stroke="#d8674f" strokeDasharray="3 2" /><Pointer /></Ico></div>
        <div className="w-[19px] flex justify-center items-center text-[12px] font-bold text-[#444]"><span className="text-[#d33]">-</span>?</div>
        <div className="w-[19px] flex justify-center items-center"><Ico s={16}><path d="M3 22L10 10l7 12z" fill="#8cc47a" stroke="#5f8a55" /><text x="11" y="14" fontSize="16" fontWeight="bold" fill="#555" fontFamily="Roboto, sans-serif">?</text></Ico></div>
        <div className="w-[19px] flex justify-center"><Ico s={16}><path d="M6 5h12l-1 18H7z" fill="#a9a9a9" stroke="#999" /><rect x="6" y="2" width="12" height="3" fill="#c2c2c2" /></Ico></div>
        <div className="flex-1" />
        <span className="font-bold underline mr-[12px] text-[12px] tracking-normal">RenderView1</span>
        <div className="flex gap-[3px] pr-[2px]">
          {[
            <path key="a" d="M1 1h10v10H1zM6 1v10" fill="none" stroke="#111" />,
            <path key="b" d="M1 1h10v10H1zM1 6h10" fill="none" stroke="#111" />,
            <path key="c" d="M1 1h10v10H1zM1 2h10" fill="none" stroke="#111" />,
            <path key="d" d="M4 3V1h7v6H9M1 4h7v7H1zM1 5h7" fill="none" stroke="#111" />,
            <path key="e" d="M2 2l8 8M10 2l-8 8" stroke="#111" strokeWidth="1.300" />,
          ].map((p, i) => (
            <div key={i} className="w-[17px] h-[17px] bg-[#e1e1e1] border border-[#adadad] flex items-center justify-center">
              <svg width={12} height={12} viewBox="0 0 12 12">{p}</svg>
            </div>
          ))}
        </div>
      </div>
      <Viewport />
    </div>
  );
}

// mesh cells of the clip, left to right, as rendered in the view
const BAND = [
  ["#7c4634", 26], ["#7a7a7a", 26], ["#3e507e", 26], ["#172058", 26], ["#18215a", 26], ["#222c60", 26], ["#2c3866", 26], ["#2b3664", 26], ["#263160", 26],
  ["#222c62", 26], ["#1f2862", 26], ["#1d2664", 26], ["#1d2666", 26], ["#1d2668", 26], ["#1e2768", 26], ["#1f286a", 26], ["#20296a", 26], ["#232d6c", 26],
  ["#2f3c76", 26], ["#3b4a7e", 26], ["#3c4b7e", 26], ["#2e3c72", 26], ["#222c66", 26], ["#1a2360", 26], ["#18205a", 26], ["#1f2c64", 26], ["#35487c", 14], ["#80807e", 12], ["#a5552f", 16],
] as const;

function Viewport() {
  let cursor = 322;
  return (
    <div className="w-[1142px] h-[818px] border-2 border-[#0000e6] bg-white p-px shrink-0">
      <div className="relative w-full h-full bg-[#53566e] overflow-hidden text-white tracking-normal font-['Liberation_Sans',sans-serif]">
        {/* the model is placed on the render canvas */}
        <svg width={440} height={220} viewBox="0 0 1320 660" className="absolute left-[343px] top-[327px]">
          <defs>
            <linearGradient id="topFace" x1="0" x2="1" y1="0" y2="0">
              <stop offset="0" stopColor="#a60026" /><stop offset=".2" stopColor="#85001a" /><stop offset=".8" stopColor="#82001a" /><stop offset="1" stopColor="#a60026" />
            </linearGradient>
            <linearGradient id="bowlCol" x1="0" x2="0" y1="0" y2="1">
              <stop offset="0" stopColor="#85001a" /><stop offset=".1" stopColor="#b5503c" /><stop offset=".2" stopColor="#cfa58c" /><stop offset=".3" stopColor="#b5b0ac" /><stop offset=".42" stopColor="#7585ad" /><stop offset=".6" stopColor="#34468f" /><stop offset="1" stopColor="#2a3580" />
            </linearGradient>
            <clipPath id="bowlClip">
              <path d="M365 238C380 180 550 150 690 150C830 150 970 170 995 232C900 275 800 297 640 300C520 290 440 260 365 238Z" />
            </clipPath>
            <clipPath id="bandClip">
              <path d="M322 230C450 262 520 290 640 300C800 297 900 275 1035 222L1030 378C960 455 830 550 690 553C560 550 470 480 370 420L348 405Z" />
            </clipPath>
          </defs>
          <path d="M120 107L1197 84L1210 140C1130 175 1040 215 985 237C900 275 800 297 640 300C520 290 450 265 370 240C280 215 190 185 115 155Z" fill="url(#topFace)" />
          <g clipPath="url(#bowlClip)">
            {Array.from({ length: 26 }, (_, i) => {
              const x = 360 + i * 25;
              const t = Math.min(0.995, Math.abs(x + 12 - 680) / 345);
              const top = 300 - 146 * Math.sqrt(1 - t ** 4);
              return <rect key={i} x={x} y={top} width={26} height={150} fill="url(#bowlCol)" />;
            })}
          </g>
          <path d="M115 155C190 185 280 215 325 232L348 405C270 350 190 290 120 250Z" fill="#41000a" />
          <path d="M1035 222C1100 195 1160 165 1210 140L1205 235C1140 280 1080 335 1030 378Z" fill="#540010" />
          <g clipPath="url(#bandClip)">
            {BAND.map(([c, w]) => {
              const x = cursor;
              cursor += w;
              return <rect key={x} x={x} y={200} width={w + 1} height={380} fill={c} />;
            })}
          </g>
          <path d="M365 240C450 265 520 290 640 300C800 297 900 275 995 232" fill="none" stroke="#4a5fa0" strokeWidth="3" />
        </svg>
        {/* orientation axes */}
        <svg width={70} height={64} viewBox="0 0 70 64" className="absolute left-[95px] top-[656px]">
          <path d="M6 55V14" stroke="#00e000" strokeWidth="1.200" />
          <path d="M6 2l4 12H2z" fill="#00d000" />
          <path d="M6 55V34" stroke="#e8e800" strokeWidth="1.500" />
          <circle cx="5" cy="36" r="4" fill="#d8d800" />
          <path d="M6 55L52 54" stroke="#e00000" strokeWidth="1.200" />
          <path d="M52 50l10 4-10 5z" fill="#d00000" />
        </svg>
        <span className="absolute left-[104px] top-[654px] text-[15px] leading-[16px]">Z</span>
        <span className="absolute left-[102px] top-[677px] text-[15px] leading-[16px]">Y</span>
        <span className="absolute left-[149px] top-[696px] text-[15px] leading-[16px]">X</span>
        {/* scalar bar */}
        <div className="absolute left-[387px] top-[699px] w-[400px] flex flex-col items-center">
          <div className="text-[16px] leading-[18px] tracking-[0.8px] text-[#f4f4f4]">U Magnitude</div>
        </div>
        {[["1.0e-01", 400], ["0.4", 525], ["0.6", 608], ["0.8", 691], ["1.0e+00", 776]].map(([t, x]) => (
          <span key={t} className="absolute top-[720px] w-[80px] -ml-[40px] text-center text-[16px] leading-[18px] tracking-[-0.3px] text-[#f4f4f4]" style={{ left: x as number }}>{t}</span>
        ))}
        <div className="absolute left-[401px] top-[751px] w-[373px] h-[16px] bg-[linear-gradient(to_right,#3b4cc0,#7295f4_20%,#b5cffb_33%,#dddcdc_50%,#f5b49a_70%,#e46a52_87%,#a5001e)]" />
        {[400, 524, 608, 691, 775].map((x) => (
          <div key={x} className="absolute top-[743px] w-px h-[12px] bg-white" style={{ left: x }} />
        ))}
      </div>
    </div>
  );
}

function RightPanel() {
  return (
    <div className="ml-[7px] w-[373px] shrink-0 h-full">
      <div className="mt-[1px]"><PanelHead title="Color Map Editor" /></div>
      <div className="pl-[9px]">
        <div className="mt-[13px] flex items-center gap-[4px]">
          <Search className="w-[296px]" />
          <GearBtn><Gear /></GearBtn>
          <GearBtn><Sm><Rainbow /></Sm></GearBtn>
          <div className="w-[22px] h-[20px] bg-[#e1e1e1] border border-[#adadad] shrink-0 flex items-center justify-center">
            <svg width={16} height={16} viewBox="0 0 24 24"><rect x="3" y="1" width="14" height="22" fill="url(#rainbow)" /><text x="8" y="22" fontFamily="Liberation Serif, serif" fontStyle="italic" fontWeight="bold" fontSize="20" fill="#000">e</text></svg>
          </div>
        </div>
        <div className="h-[18px] mt-[5px] flex items-center">Array Name: U</div>
      </div>
      <div className="flex">
        <div className="w-[356px] ml-[9px] shrink-0">
          <Check label="Lock Data Range" />
          <Check label="Interpret Values As Categories" checked={false} />
          <Check label="Rescale On Visibility Change" checked={false} />
          <Section title="Mapping Data" className="mt-[6px]" />
          <div className="mt-[6px] flex gap-[2px] h-[184px]">
            <svg width={332} height={184} viewBox="0 0 332 184" className="block bg-white shrink-0">
              <defs>
                <linearGradient id="tf" x1="0" x2="1" y1="0" y2="0">
                  <stop offset="0" stopColor="#ffffff" /><stop offset=".2" stopColor="#e3eafb" /><stop offset=".33" stopColor="#e4ecfb" /><stop offset=".5" stopColor="#e8e8e8" /><stop offset=".62" stopColor="#f8d2c0" /><stop offset=".8" stopColor="#ec907a" /><stop offset=".92" stopColor="#cf4b44" /><stop offset="1" stopColor="#b40426" />
                </linearGradient>
                <linearGradient id="cbar" x1="0" x2="1" y1="0" y2="0">
                  <stop offset="0" stopColor="#3b4cc0" /><stop offset=".2" stopColor="#7295f4" /><stop offset=".33" stopColor="#b5cffb" /><stop offset=".5" stopColor="#dddcdc" /><stop offset=".72" stopColor="#f5a788" /><stop offset=".87" stopColor="#e0654f" /><stop offset="1" stopColor="#b40426" />
                </linearGradient>
              </defs>
              <path d="M8 136L324 7V136z" fill="url(#tf)" />
              <path d="M8 136L324 7" stroke="#444" strokeWidth="1.800" />
              <rect x="8" y="152" width="316" height="24" fill="url(#cbar)" />
              {[
                [8, 136, "#7f8cd0"],
                [324, 8, "#cf4a66"],
                [8, 164, "#6a79c8"],
                [166, 164, "#dedecf"],
                [324, 164, "#c21c44"],
              ].map(([x, y, c]) => (
                <circle key={`${x}-${y}`} cx={x as number} cy={y as number} r="5" fill={c as string} stroke="#7a7a6a" strokeWidth="1.800" />
              ))}
            </svg>
            <div className="flex flex-col gap-[3px] pt-px">
              <SideBtn h={20}><Sm><Rescale pale /></Sm></SideBtn>
              <SideBtn h={20}><Sm><RescaleText t="C" pale /></Sm></SideBtn>
              <SideBtn h={20}><Sm><RescaleText t="t" pale /></Sm></SideBtn>
              <SideBtn h={20}><Sm><RescaleEye pale /></Sm></SideBtn>
              <SideBtn h={19}>
                <svg width={15} height={15} viewBox="0 0 15 15"><rect width="15" height="15" fill="#000" /><circle cx="8" cy="8" r="6.500" fill="#fff" /></svg>
              </SideBtn>
              <SideBtn h={20}>
                <svg width={16} height={15} viewBox="0 0 16 15"><path d="M1 13V2h5l2 2h6v9z" fill="#f4e08c" stroke="#a89040" /><path d="M10 14c-3-2-5-4-3.500-6 1-1 2.500-.8 3.500 .5 1-1.300 2.500-1.500 3.500-.5 1.500 2-.5 4-3.500 6z" fill="#cf1f2f" /></svg>
              </SideBtn>
              <SideBtn h={19}><Sm><LoadState /></Sm></SideBtn>
              <SideBtn h={19}><Gear s={15} /></SideBtn>
            </div>
          </div>
          <div className="mt-[8px] flex items-center h-[18px]">
            <span className="w-[34px] shrink-0">Data:</span>
            <div className="flex-1 h-[18px] bg-[#f2f2f2] border border-[#d4d4d4]" />
          </div>
          <div className="mt-[4px]"><Check label="Use log scale when mapping data to colors" checked={false} /></div>
          <div className="mt-[2px]"><Check label="Enable opacity mapping for surfaces" checked={false} /></div>
          <Section title="Color Mapping Parameters" className="mt-[5px]" />
          <div className="mt-[6px] flex items-start">
            <span className="w-[85px] shrink-0">Color Space</span>
            <Combo className="w-[270px] h-[20px]"><span>Diverging</span></Combo>
          </div>
          <div className="h-px mt-[5px] bg-[#a0a0a0]" />
          <div className="mt-[7px]"><Check label="Use Below Range Color" checked={false} /></div>
          <Disabled className="mt-[3px] ml-px"><Swatch className="bg-[#5d5d5d] border-[#666]" /><span>Below Range Color</span></Disabled>
          <div className="mt-[3px]"><Check label="Use Above Range Color" checked={false} /></div>
          <Disabled className="mt-[3px] ml-px"><Swatch className="bg-white" /><span>Above Range Color</span></Disabled>
          <Section title="Color Mapping Parameters" className="mt-[8px]" />
          <div className="mt-[7px] ml-px h-[20px] bg-[#e1e1e1] border border-[#adadad] flex items-center pl-[5px] gap-[4px]">
            <Swatch className="bg-[#f6f600]" /><span>Nan Color</span>
          </div>
          <Section title="Color Discretization" className="mt-[8px]" />
          <div className="mt-[4px]"><Check label="Discretize" /></div>
          <div className="mt-[4px] flex items-center h-[21px]">
            <span className="w-[85px] leading-[13px] shrink-0 whitespace-nowrap">Number Of Table<br />Values</span>
            <Slider w={131} at={30} />
            <Field value="256" className="ml-[6px] w-[133px]" />
          </div>
          <Section title="Annotations" className="mt-[10px]" />
          <div className="mt-[5px] flex gap-[5px]">
            <div className="w-[328px] h-[127px] bg-white border border-[#8f8f8f] shrink-0">
              <div className="h-[24px] flex items-center">
                <span className="w-[39px] pl-[5px] h-full flex items-center border-r border-[#e4e4e4]">Value</span>
                <span className="flex-1 text-center pr-[1px]">Annotation</span>
              </div>
            </div>
            <div className="flex flex-col gap-[6px] pt-px">
              <SideBtn>
                <svg width={14} height={14} viewBox="0 0 14 14"><path d="M5 1h4v4h4v4H9v4H5V9H1V5h4z" fill="#7fa0e0" stroke="#2a4a90" /></svg>
              </SideBtn>
              <SideBtn>
                <svg width={14} height={6} viewBox="0 0 14 6"><rect x=".5" y=".5" width="13" height="5" fill="#7fa0e0" stroke="#2a4a90" /></svg>
              </SideBtn>
              <SideBtn h={19}>
                <svg width={14} height={15} viewBox="0 0 14 15"><rect x="4" y="1" width="7" height="7" fill="#e84040" stroke="#844" /><rect x="1" y="6" width="7" height="7" fill="#f0e060" stroke="#884" /><rect x="7" y="7" width="6" height="6" fill="#7060e0" stroke="#448" /></svg>
              </SideBtn>
              <SideBtn h={19}>
                <svg width={14} height={15} viewBox="0 0 14 15"><rect x="4" y="1" width="7" height="7" fill="#e84040" stroke="#844" /><rect x="1" y="6" width="7" height="7" fill="#f0e060" stroke="#884" /><rect x="7" y="7" width="6" height="6" fill="#7060e0" stroke="#448" /><path d="M2 3c2-2 5-2 7 0-2 2-5 2-7 0z" fill="#222" /></svg>
              </SideBtn>
              <SideBtn h={19}>
                <svg width={13} height={13} viewBox="0 0 13 13"><path d="M1.500 1.500l10 10M11.500 1.500l-10 10" stroke="#e8553c" strokeWidth="3" /></svg>
              </SideBtn>
            </div>
          </div>
        </div>
        <div className="ml-[1px] w-[8px] flex flex-col shrink-0 h-[781px]">
          <div className="h-[17px] flex justify-end pt-[8px]">
            <svg width={8} height={6} viewBox="0 0 8 6"><path d="M1 5l3.500-4L8 5" fill="none" stroke="#555" strokeWidth="1.500" /></svg>
          </div>
          <div className="h-[721px] bg-[#cdcdcd] shrink-0" />
          <svg width={8} height={6} viewBox="0 0 8 6" className="mt-[31px]"><path d="M1 1l3.500 4L8 1" fill="none" stroke="#555" strokeWidth="1.500" /></svg>
        </div>
      </div>
    </div>
  );
}

const MENUS: [string, string, number][] = [
  ["F", "ile", 34], ["E", "dit", 36], ["V", "iew", 41], ["S", "ources", 57], ["F", "ilters", 46], ["T", "ools", 45], ["C", "atalyst", 58], ["M", "acros", 55], ["H", "elp", 40],
];

export default function App() {
  return (
    <div className="w-[1907px] h-[1033px] flex flex-col overflow-hidden bg-[#efefef] text-[#111] text-[11px] tracking-[-0.1px] leading-[14px] font-['Roboto','Liberation_Sans',sans-serif]">
      <svg width={0} height={0} className="absolute">
        <defs>
          <linearGradient id="rainbow" x1="0" x2="0" y1="0" y2="1">
            <stop offset="0" stopColor="#e0302a" /><stop offset=".25" stopColor="#f6a000" /><stop offset=".45" stopColor="#e8e020" /><stop offset=".6" stopColor="#20b060" /><stop offset=".8" stopColor="#1b7fd0" /><stop offset="1" stopColor="#4a3aa8" />
          </linearGradient>
          <linearGradient id="rainbowH" x1="0" x2="1" y1="0" y2="0">
            <stop offset="0" stopColor="#2a6fd0" /><stop offset=".35" stopColor="#30b060" /><stop offset=".65" stopColor="#f0d020" /><stop offset="1" stopColor="#e8602a" />
          </linearGradient>
          <linearGradient id="blues" x1="0" x2="0" y1="0" y2="1">
            <stop offset="0" stopColor="#7fd0c8" /><stop offset=".5" stopColor="#3d8fd6" /><stop offset="1" stopColor="#2a3f9a" />
          </linearGradient>
          <linearGradient id="blueSq" x1="0" x2="1" y1="1" y2="0">
            <stop offset="0" stopColor="#7fa8e0" /><stop offset="1" stopColor="#f4f8fd" />
          </linearGradient>
        </defs>
      </svg>
      <div className="bg-white shrink-0 h-[44px]">
        <div className="h-[17px] flex items-center pl-[12px] text-[11.500px] tracking-normal">
          <svg width={16} height={12} viewBox="0 0 16 12" className="block">
            <path d="M0 12L3 0h4L4 12z" fill="#c8341f" />
            <path d="M5 12L8 0h3.500L8.500 12z" fill="#1f9a4a" />
            <path d="M10 12L13 0h3L13 12z" fill="#2a5fb0" />
          </svg>
          <span className="ml-[6px]">ParaView 5.4.1 64-bit</span>
          <div className="flex-1" />
          <div className="flex items-center -mt-[2px]">
            <div className="w-[10px] h-px bg-black mr-[35px]" />
            <div className="w-[10px] h-[10px] border border-black mr-[35px]" />
            <svg width={10} height={10} viewBox="0 0 10 10" className="-mr-[4px] block"><path d="M0 0l10 10M10 0L0 10" stroke="#111" /></svg>
          </div>
        </div>
        <div className="h-[27px] pt-[9px] pl-[10px] flex items-center border-l-[2px] border-[#1b6fb8] text-[12px] tracking-normal -mt-px">
          {MENUS.map(([k, rest, w]) => (
            <span key={k + rest} className="shrink-0" style={{ width: w }}><u>{k}</u>{rest}</span>
          ))}
        </div>
      </div>
      <TopToolbars />
      <div className="flex h-[863px] shrink-0 overflow-hidden">
        <LeftPanel />
        <CenterPanel />
        <RightPanel />
      </div>
      <div className="flex-1 flex border-b border-[#222] pl-[956px] pt-[6px] overflow-hidden">
        <div className="w-[18px] h-[16px] mt-[3px] bg-[#d0d0d0] border border-[#c0c0c0] flex items-center justify-center shrink-0">
          <svg width={10} height={10} viewBox="0 0 10 10"><path d="M1.500 1.500l7 7M8.500 1.500l-7 7" stroke="#9a9a9a" strokeWidth="2.400" /></svg>
        </div>
        <div className="w-[925px] ml-px bg-[#e5e5e5] border border-[#bdbdbd] shrink-0" />
      </div>
    </div>
  );
}
